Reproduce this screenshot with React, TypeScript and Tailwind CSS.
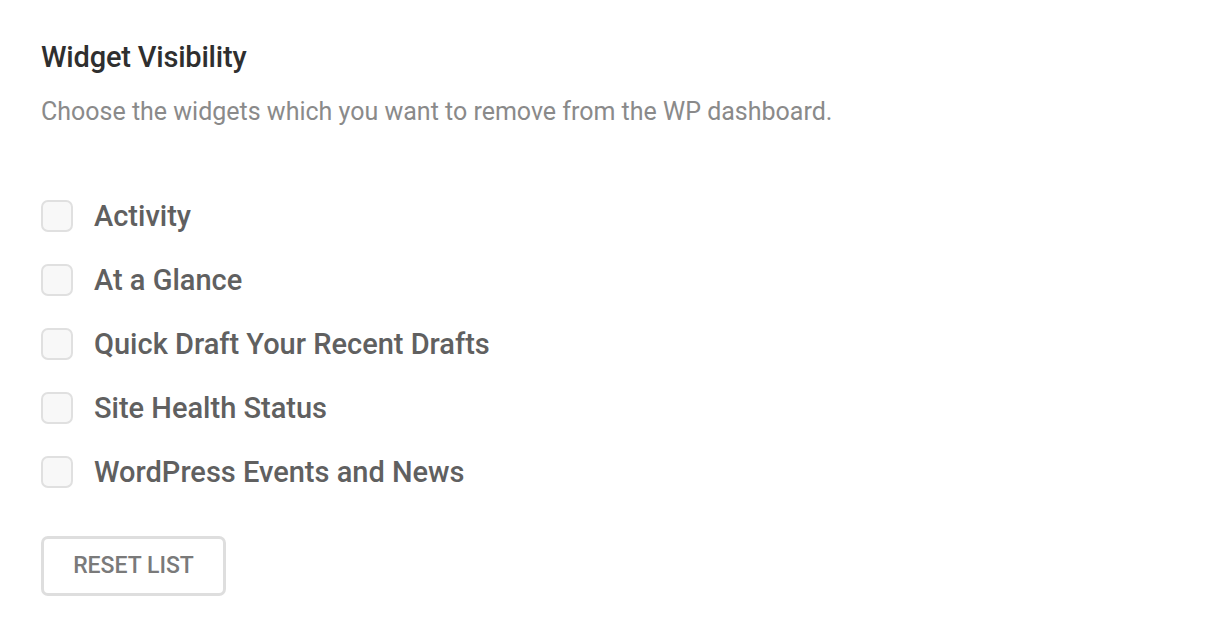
import React from "react";

const items = [
  "Activity",
  "At a Glance",
  "Quick Draft Your Recent Drafts",
  "Site Health Status",
  "WordPress Events and News",
];

export default function App() {
  return (
    <div className="min-h-[642px] w-[1220px] bg-white pl-[41px] pt-[38px]" style={{ fontFamily: "Roboto, 'Liberation Sans', sans-serif" }}>
      <h2 className="text-[29px] leading-[38px] font-medium text-[#2f2f2f] tracking-[-0.2px]">Widget Visibility</h2>
      <p className="mt-[20px] text-[25px] leading-[32px] text-[#8a8a8a]">
        Choose the widgets which you want to remove from the WP dashboard.
      </p>
      <div className="mt-[72px] flex flex-col gap-[32px]">
        {items.map((label) => (
          <label key={label} className="flex items-center gap-[21px] h-[32px] cursor-pointer">
            <span className="w-[32px] h-[32px] rounded-[7px] border-2 border-[#e0e0e0] bg-[#f8f8f8] shrink-0" />
            <span className="text-[29px] leading-[32px] font-medium text-[#606060]">{label}</span>
          </label>
        ))}
      </div>
      <button className="mt-[48px] w-[185px] h-[60px] rounded-[7px] border-[3px] border-[#dedede] bg-white text-[23px] font-medium text-[#7a7a7a] uppercase">
        Reset List
      </button>
    </div>
  );
}
